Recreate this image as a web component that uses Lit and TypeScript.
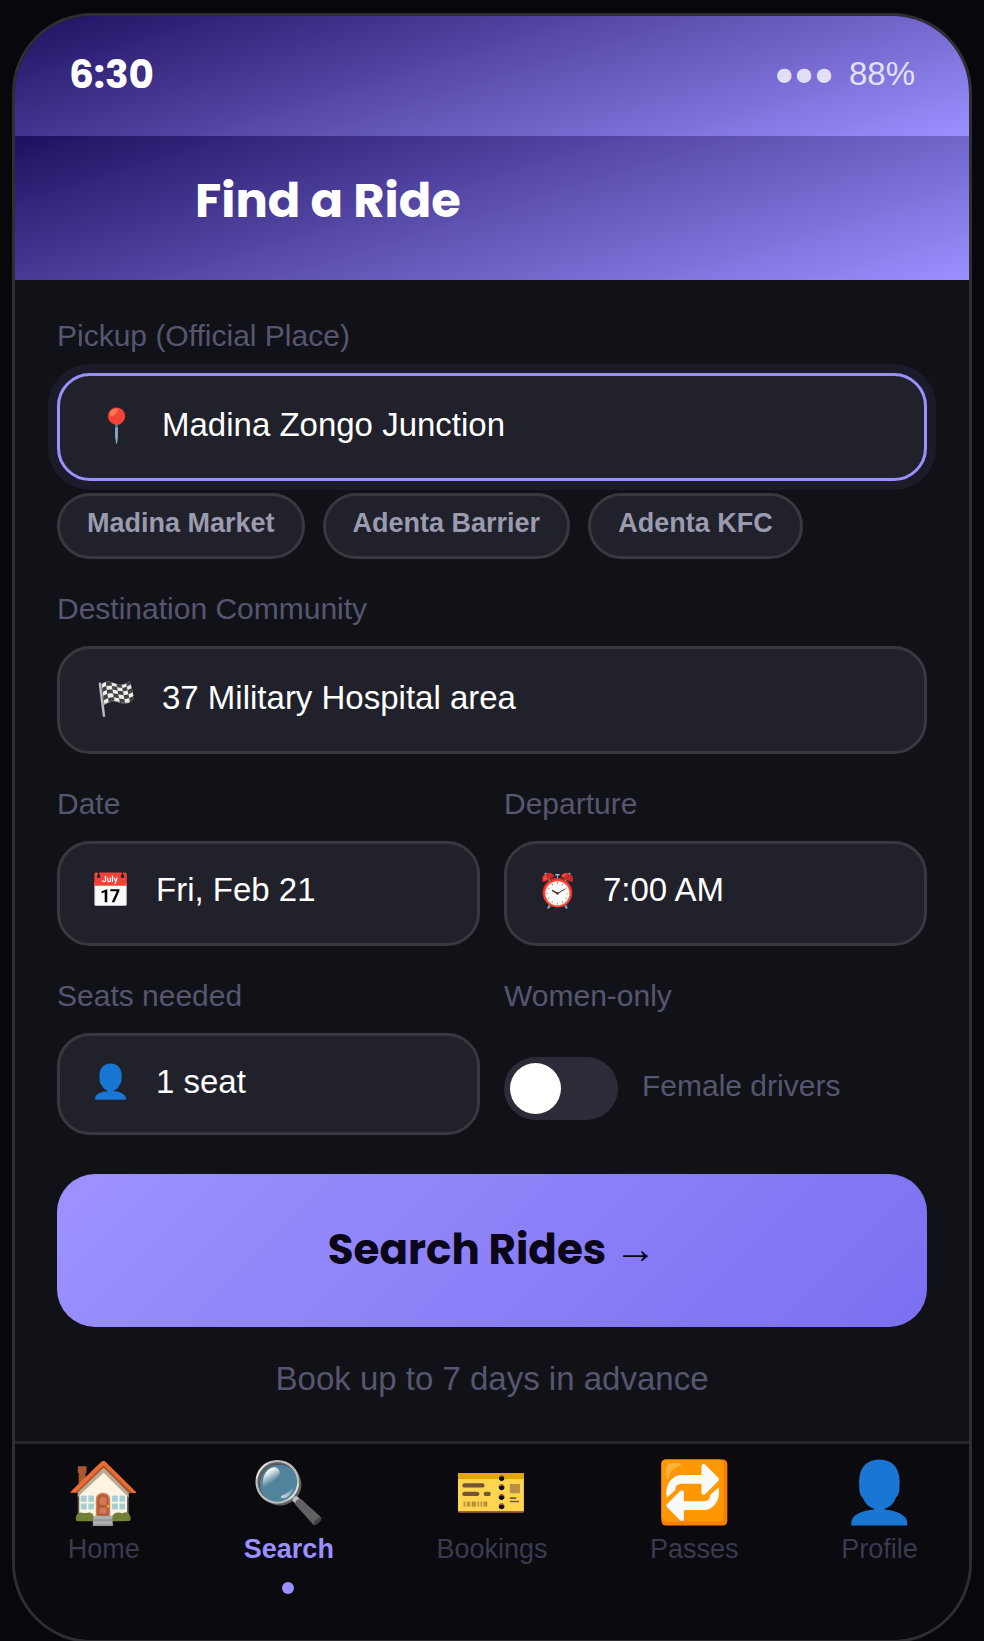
import {LitElement, html, css} from "lit";
import {customElement} from "lit/decorators.js";

const tabs = [
  {icon: "🏠", label: "Home"},
  {icon: "🔍", label: "Search", active: true},
  {icon: "🎫", label: "Bookings"},
  {icon: "🔁", label: "Passes"},
  {icon: "👤", label: "Profile"},
];

@customElement("app-root")
export class AppRoot extends LitElement {
  static styles = css`
    :host {
      display: block;
      width: 984px;
      height: 1641px;
      overflow: hidden;
      background: #08080c;
      font-family: "Liberation Sans", Arial, sans-serif;
    }
    .phone {
      box-sizing: border-box;
      width: 960px;
      height: 1630px;
      margin: 13px 0 0 12px;
      border: 3px solid #2e2e33;
      border-radius: 80px;
      overflow: hidden;
      background: #111217;
      display: flex;
      flex-direction: column;
    }
    .status {
      height: 120px;
      flex: none;
      box-sizing: border-box;
      padding: 39px 54px 0 54px;
      display: flex;
      justify-content: space-between;
      align-items: flex-start;
      background: linear-gradient(163deg, #1e1060, #9b90ff);
    }
    .time {
      font-family: Poppins, Inter, sans-serif;
      font-weight: 700;
      font-size: 39px;
      line-height: 40px;
      color: #fff;
    }
    .signal {
      display: flex;
      gap: 15px;
      margin-top: -1px;
      font-size: 33px;
      line-height: 40px;
      color: rgba(255, 255, 255, 0.8);
    }
    .header {
      height: 144px;
      flex: none;
      box-sizing: border-box;
      padding: 0 0 14px 180px;
      display: flex;
      align-items: center;
      background: linear-gradient(163deg, #1e1060, #9b90ff);
    }
    h1 {
      margin: 0;
      font-family: Poppins, Inter, sans-serif;
      font-weight: 700;
      font-size: 48px;
      color: #fff;
    }
    .form {
      flex: 1;
      box-sizing: border-box;
      padding: 38px 42px 0 42px;
    }
    .label {
      font-size: 30px;
      line-height: 36px;
      color: #565670;
      margin-bottom: 19px;
    }
    .field {
      box-sizing: border-box;
      display: flex;
      align-items: center;
      border: 3px solid #38383e;
      border-radius: 33px;
      background: #20212a;
      color: #fff;
      font-size: 33px;
    }
    .field.big {
      height: 108px;
      padding: 0 0 4px 36px;
      gap: 28px;
    }
    .field.focus {
      border-color: #9b90ff;
      box-shadow: 0 0 0 9px rgba(155, 144, 255, 0.08);
    }
    .chips {
      display: flex;
      gap: 18px;
      margin-top: 12px;
      margin-bottom: 32px;
    }
    .chip {
      box-sizing: border-box;
      height: 66px;
      padding: 0 27px 6px 27px;
      display: flex;
      align-items: center;
      border: 3px solid #38383e;
      border-radius: 33px;
      background: #20212a;
      color: #9b9bb0;
      font-weight: 700;
      font-size: 27px;
    }
    .icon {
      flex: none;
      width: 38px;
      text-align: center;
      font-size: 33px;
    }
    .row {
      display: grid;
      grid-template-columns: 1fr 1fr;
      gap: 24px;
      margin-top: 32px;
    }
    .field.small {
      padding: 0 0 7px 30px;
      gap: 28px;
    }
    .field.date {
      height: 105px;
    }
    .field.seat {
      height: 102px;
      padding-bottom: 5px;
    }
    .toggle-row {
      box-sizing: border-box;
      display: flex;
      align-items: center;
      gap: 24px;
      height: 102px;
      padding-top: 8px;
    }
    .toggle {
      flex: none;
      width: 114px;
      height: 63px;
      box-sizing: border-box;
      padding: 6px;
      border-radius: 32px;
      background: #2c2c38;
    }
    .knob {
      width: 51px;
      height: 51px;
      border-radius: 50%;
      background: #fff;
    }
    .toggle-text {
      margin-bottom: 4px;
      font-size: 30px;
      color: #565670;
    }
    .search {
      box-sizing: border-box;
      height: 153px;
      margin-top: 39px;
      padding-bottom: 3px;
      border-radius: 38px;
      background: linear-gradient(135deg, #9d92ff, #7b70f0);
      display: flex;
      align-items: center;
      justify-content: center;
      gap: 8px;
      color: #0b0618;
      font-family: Poppins, Inter, sans-serif;
      font-weight: 700;
      font-size: 42px;
    }
    .arrow {
      font-family: "Liberation Sans", Arial, sans-serif;
      font-weight: 400;
    }
    .note {
      margin-top: 32px;
      text-align: center;
      font-size: 33px;
      line-height: 40px;
      color: #565670;
    }
    nav {
      flex: none;
      box-sizing: border-box;
      height: 199px;
      border-top: 3px solid #26262c;
      background: #0a0a0f;
      display: flex;
      justify-content: space-around;
      padding-top: 10px;
    }
    .tab {
      display: flex;
      flex-direction: column;
      align-items: center;
    }
    .tab-icon {
      font-size: 60px;
      line-height: 78px;
    }
    .tab-label {
      font-size: 27px;
      line-height: 34px;
      color: #3a3a50;
    }
    .tab.active .tab-label {
      color: #9b90ff;
      font-weight: 700;
    }
    .dot {
      width: 12px;
      height: 12px;
      margin: 16px 2px 0 0;
      border-radius: 50%;
      background: #9b90ff;
    }
  `;

  render() {
    return html`
      <div class="phone">
        <div class="status">
          <span class="time">6:30</span>
          <span class="signal"><span>●●●</span><span>88%</span></span>
        </div>
        <div class="header"><h1>Find a Ride</h1></div>
        <div class="form">
          <div class="label">Pickup (Official Place)</div>
          <div class="field big focus"><span class="icon">📍</span>Madina Zongo Junction</div>
          <div class="chips">
            <div class="chip">Madina Market</div>
            <div class="chip">Adenta Barrier</div>
            <div class="chip">Adenta KFC</div>
          </div>
          <div class="label">Destination Community</div>
          <div class="field big"><span class="icon">🏁</span>37 Military Hospital area</div>
          <div class="row">
            <div>
              <div class="label">Date</div>
              <div class="field small date"><span class="icon">📅</span>Fri, Feb 21</div>
            </div>
            <div>
              <div class="label">Departure</div>
              <div class="field small date"><span class="icon">⏰</span>7:00 AM</div>
            </div>
          </div>
          <div class="row">
            <div>
              <div class="label">Seats needed</div>
              <div class="field small seat"><span class="icon">👤</span>1 seat</div>
            </div>
            <div>
              <div class="label">Women-only</div>
              <div class="toggle-row">
                <div class="toggle"><div class="knob"></div></div>
                <span class="toggle-text">Female drivers</span>
              </div>
            </div>
          </div>
          <div class="search"><span>Search Rides</span><span class="arrow">→</span></div>
          <div class="note">Book up to 7 days in advance</div>
        </div>
        <nav>
          ${tabs.map(
            (t) => html`
              <div class="tab ${t.active ? "active" : ""}">
                <span class="tab-icon">${t.icon}</span>
                <span class="tab-label">${t.label}</span>
                ${t.active ? html`<div class="dot"></div>` : ""}
              </div>
            `
          )}
        </nav>
      </div>
    `;
  }
}
